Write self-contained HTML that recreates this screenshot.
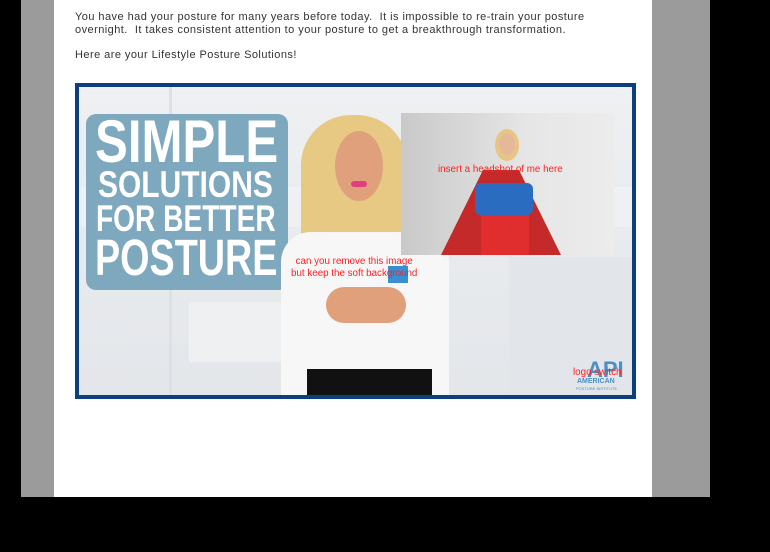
<!DOCTYPE html>
<html><head><meta charset="utf-8"><style>
*{margin:0;padding:0;box-sizing:border-box}
body{width:770px;height:552px;background:#000;position:relative;overflow:hidden;font-family:"Liberation Sans",sans-serif}
.gray{position:absolute;left:21px;top:0;width:689px;height:497px;background:#9b9b9b}
.page{position:absolute;left:54px;top:0;width:598px;height:497px;background:#fff}
.t{position:absolute;left:75px;font-size:11px;letter-spacing:.45px;color:#333;line-height:13px;white-space:nowrap}
.frame{position:absolute;left:75px;top:83px;width:561px;height:316px;border:4px solid #0d3f7f;background:linear-gradient(180deg,#eef0f2,#e3e6ea);overflow:hidden}
.a{position:absolute}
.box{left:7px;top:27px;width:202px;height:176px;background:#7ea8bd;border-radius:10px}
.w{position:absolute;color:#fff;font-weight:bold;white-space:nowrap;transform-origin:0 0}
.red{position:absolute;color:#ff2020;font-size:9.8px;white-space:nowrap;text-align:center}
</style></head><body>
<div class="gray"></div><div class="page"></div>
<div class="t" style="top:11px">You have had your posture for many years before today.&nbsp; It is impossible to re-train your posture</div>
<div class="t" style="top:24px">overnight.&nbsp; It takes consistent attention to your posture to get a breakthrough transformation.</div>
<div class="t" style="top:49px">Here are your Lifestyle Posture Solutions!</div>
<div class="frame">
 <div class="a" style="left:0;top:100px;width:553px;height:40px;background:#f2f3f5;opacity:.6"></div>
 <div class="a" style="left:90px;top:0;width:3px;height:308px;background:#dde0e4"></div>
 <div class="a" style="left:110px;top:215px;width:240px;height:60px;background:#eef0f2"></div>
 <div class="a" style="left:430px;top:170px;width:123px;height:138px;background:#e2e6ea"></div>
 <div class="a box"></div>
 <div class="w" style="left:16px;top:20px;font-size:60px;transform:scaleX(.82)">SIMPLE</div>
 <div class="w" style="left:19px;top:77px;font-size:37px;transform:scaleX(.81)">SOLUTIONS</div>
 <div class="w" style="left:17px;top:111px;font-size:37px;transform:scaleX(.76)">FOR BETTER</div>
 <div class="w" style="left:16px;top:141px;font-size:51px;transform:scaleX(.74)">POSTURE</div>
 <!-- woman -->
 <div class="a" style="left:222px;top:28px;width:106px;height:190px;background:#e8c984;border-radius:50px 50px 20px 20px"></div>
 <div class="a" style="left:256px;top:44px;width:48px;height:70px;background:#e0a07c;border-radius:50%"></div>
 <div class="a" style="left:272px;top:94px;width:16px;height:6px;background:#e04080;border-radius:4px"></div>
 <div class="a" style="left:202px;top:145px;width:168px;height:165px;background:#f7f7f8;border-radius:30px 30px 0 0"></div>
 <div class="a" style="left:247px;top:200px;width:80px;height:36px;background:#e0a07c;border-radius:20px"></div>
 <div class="a" style="left:228px;top:282px;width:125px;height:30px;background:#111"></div>
 <div class="a" style="left:309px;top:179px;width:20px;height:17px;background:#3a8fd0"></div>
 <!-- photo -->
 <div class="a" style="left:322px;top:26px;width:213px;height:142px;background:linear-gradient(90deg,#c9c9c9,#e6e6e6 60%,#ececec)">
  <div class="a" style="left:40px;top:57px;width:120px;height:85px;background:#c42a2a;clip-path:polygon(35% 0,65% 0,100% 100%,0 100%)"></div>
  <div class="a" style="left:94px;top:16px;width:24px;height:32px;background:#e8c585;border-radius:50%"></div>
  <div class="a" style="left:98px;top:20px;width:16px;height:22px;background:#e6b89a;border-radius:50%"></div>
  <div class="a" style="left:74px;top:70px;width:58px;height:32px;background:#2a6cc0;border-radius:6px"></div>
  <div class="a" style="left:80px;top:102px;width:48px;height:40px;background:#e02e2e"></div>
 </div>
 <div class="red" style="left:359px;top:77px">insert a headshot of me here</div>
 <div class="red" style="left:212px;top:169px;line-height:12px">can you remove this image<br>but keep the soft background</div>
 <div class="a" style="left:508px;top:270px;color:#4a90c2;font-weight:bold;font-size:22px">API</div>
 <div class="a" style="left:498px;top:291px;color:#4a90c2;font-weight:bold;font-size:7px">AMERICAN</div>
 <div class="a" style="left:497px;top:299px;color:#4a90c2;font-size:4px">POSTURE INSTITUTE</div>
 <div class="red" style="left:494px;top:280px">logo switch</div>
</div>
</body></html>
